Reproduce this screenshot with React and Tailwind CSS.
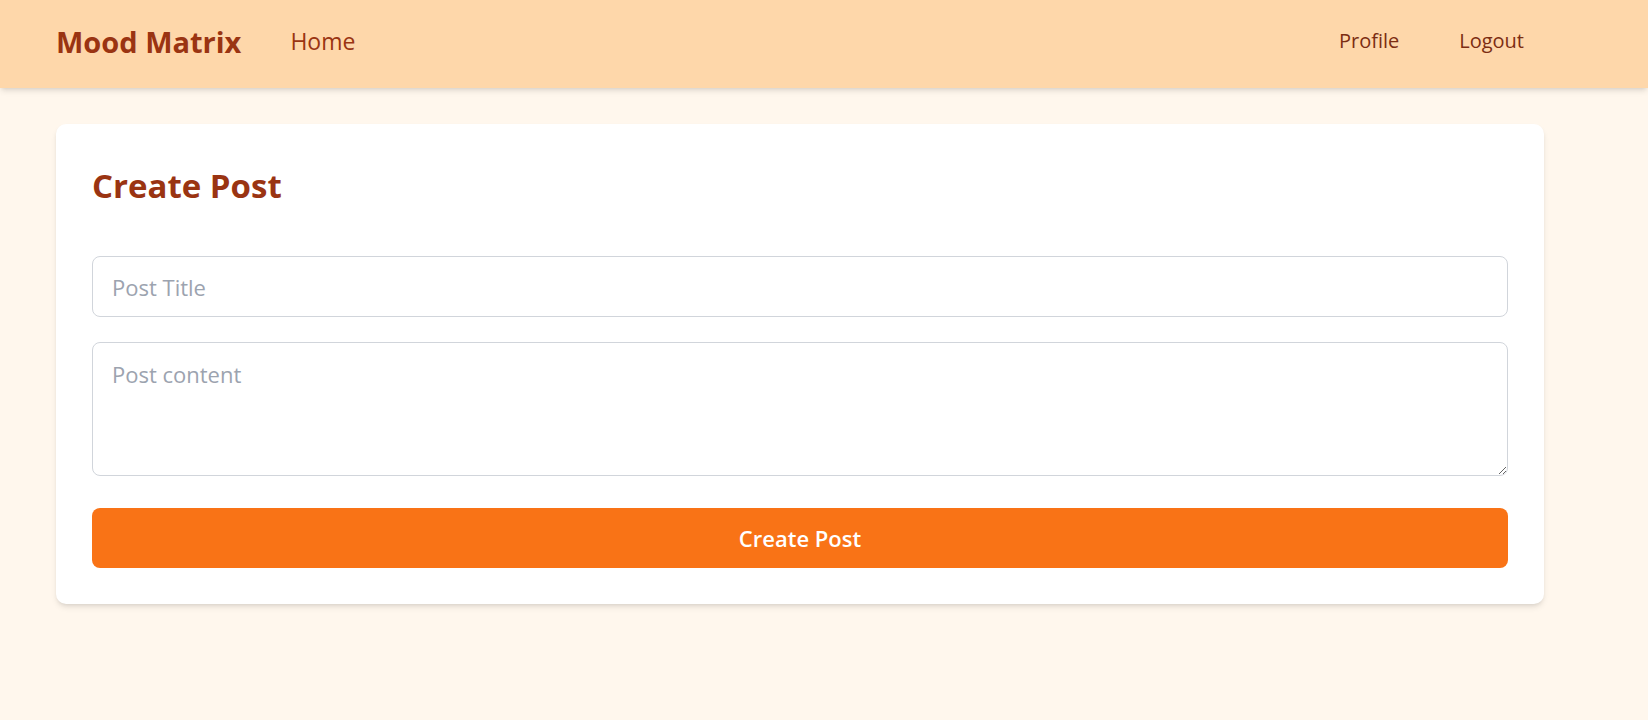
import React, { useState } from "react";

const Navbar = () => {
    return (
        <nav className="bg-[#fed7aa] shadow-md relative z-10">
            <div className="max-w-[1536px] mx-auto h-[88px] pb-[6px] flex items-center justify-between">
                <div className="flex items-center">
                    <a href="#" className="text-[29px] font-bold text-[#9a3412] leading-none">
                        Mood Matrix
                    </a>
                    <a href="#" className="ml-[49px] text-[23px] text-[#9a3412] leading-none">
                        Home
                    </a>
                </div>
                <div className="flex items-center gap-[60px] mr-[68px]">
                    <a href="#" className="text-[20px] text-[#7c2d12] leading-none">
                        Profile
                    </a>
                    <a href="#" className="text-[20px] text-[#7c2d12] leading-none">
                        Logout
                    </a>
                </div>
            </div>
        </nav>
    );
};

const CreatePost = () => {
    const [title, setTitle] = useState("");
    const [content, setContent] = useState("");

    const handleSubmit = (e) => {
        e.preventDefault();
    };

    return (
        <div className="max-w-[1488px] bg-white rounded-[10px] shadow-md p-9">
            <h2 className="text-[33px] leading-[52px] font-bold text-[#9a3412] mb-[44px]">
                Create Post
            </h2>
            <form onSubmit={handleSubmit} className="flex flex-col">
                <input
                    type="text"
                    value={title}
                    onChange={(e) => setTitle(e.target.value)}
                    placeholder="Post Title"
                    className="h-[61px] w-full border border-[#d1d5db] rounded-lg px-[19px] text-[22px] text-gray-800 placeholder:text-[#9ca3af] outline-none"
                />
                <textarea
                    value={content}
                    onChange={(e) => setContent(e.target.value)}
                    placeholder="Post content"
                    className="mt-[25px] h-[134px] w-full border border-[#d1d5db] rounded-lg px-[19px] pt-[15px] text-[22px] leading-[33px] text-gray-800 placeholder:text-[#9ca3af] outline-none"
                />
                <button
                    type="submit"
                    className="mt-8 h-[60px] w-full bg-[#f97316] text-white text-[22px] font-semibold rounded-lg"
                >
                    Create Post
                </button>
            </form>
        </div>
    );
};

const App = () => {
    return (
        <div
            className="min-h-screen bg-[#fff7ed]"
            style={{ fontFamily: '"Open Sans", "Noto Sans", sans-serif' }}
        >
            <Navbar />
            <main className="max-w-[1536px] mx-auto pt-9">
                <CreatePost />
            </main>
        </div>
    );
};

export default App;
